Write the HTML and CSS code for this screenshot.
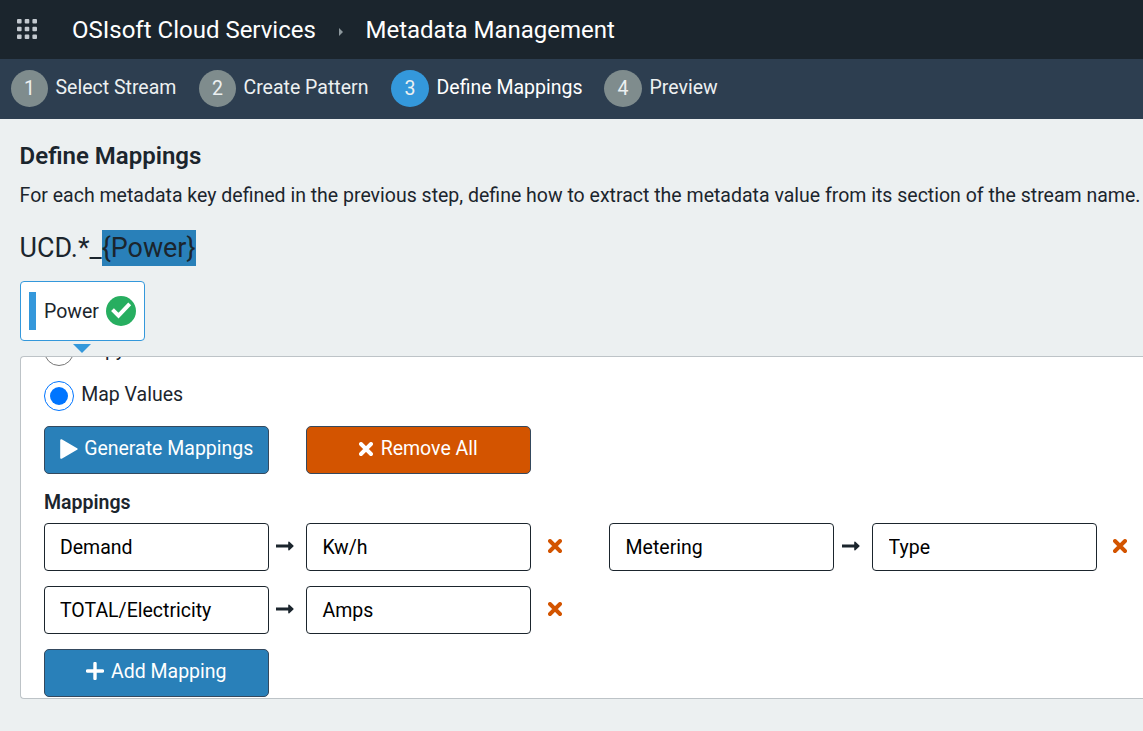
FILE: index.html
```html
<!DOCTYPE html>
<html lang="en">
<head>
<meta charset="utf-8">
<title>Metadata Management</title>
<link rel="stylesheet" href="styles.css">
</head>
<body>
<svg class="sprite" aria-hidden="true">
  <symbol id="arrow" viewBox="0 0 18 10"><path d="M0 3.5h12.2V1.2q.2-1.2 1.2-.4l4 3.6q.6.6 0 1.2l-4 3.6q-1 .8-1.2-.4V6.5H0z"/></symbol>
  <symbol id="cross" viewBox="0 0 14 14"><path d="M2 2l10 10M12 2L2 12" fill="none" stroke="currentColor" stroke-width="3.9" stroke-linecap="round"/></symbol>
</svg>
<header class="topbar">
  <svg class="apps" viewBox="0 0 20 20"><g fill="#c3c9cf"><rect width="4.6" height="4.6" rx="1"/><rect x="7.7" width="4.6" height="4.6" rx="1"/><rect x="15.4" width="4.6" height="4.6" rx="1"/><rect y="7.7" width="4.6" height="4.6" rx="1"/><rect x="7.7" y="7.7" width="4.6" height="4.6" rx="1"/><rect x="15.4" y="7.7" width="4.6" height="4.6" rx="1"/><rect y="15.4" width="4.6" height="4.6" rx="1"/><rect x="7.7" y="15.4" width="4.6" height="4.6" rx="1"/><rect x="15.4" y="15.4" width="4.6" height="4.6" rx="1"/></g></svg>
  <span class="brand">OSIsoft Cloud Services</span>
  <svg class="crumb" viewBox="0 0 4 8"><path d="M0 0l4 4-4 4z" fill="#8d989d"/></svg>
  <span class="section">Metadata Management</span>
</header>
<nav class="steps">
  <div class="step step-1"><span class="num">1</span><span class="step-label">Select Stream</span></div>
  <div class="step step-2"><span class="num">2</span><span class="step-label">Create Pattern</span></div>
  <div class="step step-3 active"><span class="num">3</span><span class="step-label">Define Mappings</span></div>
  <div class="step step-4"><span class="num">4</span><span class="step-label">Preview</span></div>
</nav>
<main class="content">
  <h1 class="title">Define Mappings</h1>
  <p class="intro">For each metadata key defined in the previous step, define how to extract the metadata value from its section of the stream name.</p>
  <div class="pattern"><span>UCD.*_</span><span class="key">{Power}</span></div>
  <div class="tab">
    <span class="tab-bar"></span>
    <span class="tab-label">Power</span>
    <svg class="check" viewBox="0 0 30 30"><circle cx="15" cy="15" r="15" fill="#27ae60"/><path d="M6.5 13.7l6 6L23.7 7.9" fill="none" stroke="#fff" stroke-width="4"/></svg>
  </div>
  <svg class="pointer" viewBox="0 0 18 9"><path d="M0 0h18L9 9z" fill="#3498db"/></svg>
  <section class="panel">
    <div class="scrolled">
      <label class="choice"><span class="radio"></span><span class="choice-label">Copy</span></label>
      <label class="choice"><span class="radio checked"></span><span class="choice-label">Map Values</span></label>
      <div class="actions">
        <button class="btn"><svg class="play" viewBox="0 0 18 20"><path d="M1.2 1.2L16.6 10 1.2 18.8z" fill="#fff" stroke="#fff" stroke-width="2" stroke-linejoin="round"/></svg><span class="btn-label">Generate Mappings</span></button>
        <button class="btn danger"><svg class="cross"><use href="#cross"/></svg><span class="btn-label">Remove All</span></button>
      </div>
      <h2 class="subtitle">Mappings</h2>
      <div class="mappings">
        <div class="mapping"><input class="field" value="Demand"><svg class="arrow"><use href="#arrow"/></svg><input class="field" value="Kw/h"><svg class="cross remove"><use href="#cross"/></svg></div>
        <div class="mapping"><input class="field" value="Metering"><svg class="arrow"><use href="#arrow"/></svg><input class="field" value="Type"><svg class="cross remove"><use href="#cross"/></svg></div>
        <div class="mapping"><input class="field" value="TOTAL/Electricity"><svg class="arrow"><use href="#arrow"/></svg><input class="field" value="Amps"><svg class="cross remove"><use href="#cross"/></svg></div>
      </div>
      <button class="btn add"><svg class="plus" viewBox="0 0 18 18"><path d="M9 1.5v15M1.5 9h15" stroke="#fff" stroke-width="3.4" stroke-linecap="round"/></svg><span class="btn-label">Add Mapping</span></button>
    </div>
  </section>
</main>
</body>
</html>
```
FILE: styles.css
```css
* { box-sizing: border-box; }
html, body { height: 100%; }
body {
  margin: 0;
  overflow: hidden;
  background: #ecf0f1;
  color: #1b252d;
  font: 19.5px/24px Roboto, "Liberation Sans", sans-serif;
}
svg { display: block; flex: none; }
.sprite { position: absolute; width: 0; height: 0; }

.topbar {
  display: flex;
  align-items: center;
  height: 59px;
  padding-left: 17px;
  background: #1b252d;
  color: #fff;
  font-size: 24px;
  line-height: 28px;
  white-space: nowrap;
}
.apps { width: 20px; height: 20px; margin-bottom: 2px; }
.brand { width: 244px; margin-left: 35px; }
.crumb { width: 4px; height: 8px; margin: 5px 22.5px 0 23px; }

.steps {
  display: flex;
  align-items: center;
  height: 60px;
  padding: 0 0 1px 11px;
  background: #2d3e50;
  color: #ecf0f1;
  white-space: nowrap;
}
.step { display: flex; align-items: center; gap: 7.5px; }
.step-1 { width: 188px; }
.step-2 { width: 192px; }
.step-3 { width: 213px; }
.num {
  width: 37px;
  height: 37px;
  border-radius: 50%;
  background: #7f8c8d;
  line-height: 38px;
  text-align: center;
}
.step-3 .num, .step-4 .num { width: 38px; }
.step-label { padding-bottom: 2px; }
.active .num { background: #3498db; }
.active .step-label { color: #fff; }

.content { padding-left: 19.6px; white-space: nowrap; }
.title { margin: 0; padding-top: 22px; font-size: 24px; line-height: 30px; font-weight: 600; }
.intro { margin: 0; padding-top: 13px; line-height: 24px; }
.pattern { display: flex; margin-top: 22px; font-size: 26.9px; line-height: 37px; }
.key { height: 36px; background: #2980b9; }

.tab {
  display: flex;
  align-items: center;
  width: 125px;
  height: 60px;
  margin: 14px 0 0 .4px;
  padding-left: 8px;
  border: 1px solid #3498db;
  border-radius: 4px;
  background: #fff;
}
.tab-bar { width: 7px; height: 38px; margin-right: 8px; background: #3498db; }
.tab-label { width: 62px; padding-top: 1px; }
.check { width: 30px; height: 30px; }
.pointer { width: 18px; height: 9px; margin: 3px 0 3px 53.4px; }

.panel {
  height: 343px;
  margin-left: .4px;
  overflow: hidden;
  border: 1px solid #bdc3c7;
  border-right: 0;
  border-radius: 4px 0 0 4px;
  background: #fff;
}
.scrolled { margin-top: -21px; padding-left: 23px; }
.choice { display: flex; align-items: center; height: 30px; margin-bottom: 15px; }
.radio {
  display: grid;
  place-items: center;
  width: 30px;
  height: 30px;
  margin-right: 7.2px;
  border: 1px solid #767676;
  border-radius: 50%;
}
.radio.checked { border-color: #0075ff; }
.radio.checked::after { content: ""; width: 18px; height: 18px; border-radius: 50%; background: #0075ff; }
.choice-label { padding-bottom: 2px; }
.actions { display: flex; gap: 37px; }
.btn {
  display: flex;
  align-items: center;
  justify-content: center;
  gap: 6.5px;
  width: 225px;
  height: 48px;
  padding: 0 0 4px;
  border: 1px solid #34495e;
  border-radius: 5px;
  background: #2980b9;
  color: #fff;
  font: inherit;
}
.btn-label { padding-top: 2px; }
.danger { gap: 7.5px; background: #d35400; }
.play { width: 18px; height: 20px; margin-top: 2px; }
.plus { width: 18px; height: 18px; }
.cross { width: 14px; height: 14px; }
.danger .cross { margin-top: 2px; }

.subtitle { margin: 17px 0 8px; font-size: 19.5px; line-height: 24px; font-weight: 600; }
.mappings { display: grid; grid-template-columns: 565px 565px; row-gap: 15px; }
.mapping { display: flex; align-items: center; }
.field {
  width: 225px;
  height: 48px;
  padding: 0 15px;
  border: 1px solid #1b252d;
  border-radius: 4px;
  background: #fff;
  color: #000;
  font: inherit;
}
.arrow { width: 18px; height: 10px; margin: 0 12px 2px 7px; fill: #1b252d; }
.arrow + .field { padding-left: 15.5px; }
.mapping:nth-child(2) .field { padding-left: 15.6px; }
.mapping:nth-child(2) .arrow { margin-left: 8px; }
.remove { margin: 0 0 2px 17px; color: #d35400; }
.mapping:nth-child(2) .remove { margin-left: 16.5px; }
.add { margin-top: 15px; }
```
